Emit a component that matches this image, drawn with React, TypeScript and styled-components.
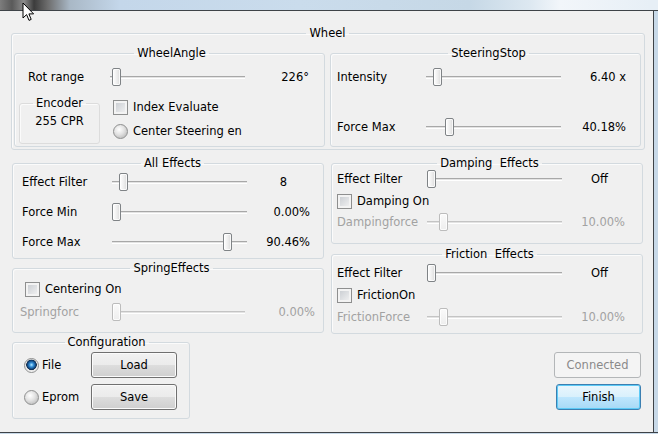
import styled, { createGlobalStyle } from "styled-components";

const GlobalStyle = createGlobalStyle`
  html, body {
    margin: 0;
    padding: 0;
    background: #f0f0f0;
  }
  body {
    font-family: "DejaVu Sans", "Liberation Sans", sans-serif;
    font-size: 11.5px;
    color: #000;
  }
  * {
    box-sizing: border-box;
  }
`;

const Window = styled.div`
  position: relative;
  width: 658px;
  height: 434px;
  overflow: hidden;
  display: flex;
  flex-direction: column;
  background: #c8d9e8;
`;

const TitleStrip = styled.div`
  flex: none;
  height: 11px;
  border-bottom: 1px solid #3e4348;
  background: linear-gradient(
    to right,
    #7d7d7d 0px,
    #5a5a5a 12px,
    #8c8c8c 24px,
    #3c3c3c 34px,
    #6e6e6e 48px,
    #a9b8c6 70px,
    #c4d7ea 120px,
    #cadcec 300px,
    #c6d8e6 470px,
    #dde8f1 530px,
    #f2f6fa 560px,
    #e7eff6 650px
  );
`;

const Frame = styled.div`
  flex: none;
  display: flex;
  height: 422px;
  border-bottom: 1px solid #3e4348;
`;

const Client = styled.div`
  width: 654px;
  height: 100%;
  background: #f0f0f0;
  border-right: 1px solid #3e4348;
  padding: 16px 0 0 11px;
`;

const Group = styled.fieldset<{ $w: number; $h: number; $pad?: string }>`
  margin: 0;
  min-width: 0;
  flex: none;
  width: ${(p) => p.$w}px;
  height: ${(p) => p.$h}px;
  padding: ${(p) => p.$pad ?? "0"};
  border: 1px solid #d3dadf;
  border-radius: 3px;
  box-shadow: inset 1px 1px 0 #fbfbfb;
`;

const Legend = styled.legend`
  margin: 0 auto;
  padding: 0 3px;
  line-height: 13px;
  white-space: pre;
`;

const Row = styled.div`
  display: flex;
  gap: 5px;
`;

const Lower = styled.div`
  display: flex;
  gap: 7px;
  margin: 7px 0 0 1px;
`;

const Column = styled.div`
  display: flex;
  flex-direction: column;
`;

const SliderRow = styled.div<{ $cols: string; $h?: number; $mt?: number; $ml?: number }>`
  display: grid;
  grid-template-columns: ${(p) => p.$cols};
  align-items: center;
  height: ${(p) => p.$h ?? 20}px;
  margin-top: ${(p) => p.$mt ?? 0}px;
  margin-left: ${(p) => p.$ml ?? 0}px;
`;

const Label = styled.span<{ $off?: boolean }>`
  line-height: 13px;
  white-space: nowrap;
  color: ${(p) => (p.$off ? "#a2a2a2" : "#000")};
`;

const Value = styled.span<{ $off?: boolean; $pr?: number }>`
  text-align: right;
  line-height: 13px;
  white-space: nowrap;
  padding-right: ${(p) => p.$pr ?? 0}px;
  color: ${(p) => (p.$off ? "#a2a2a2" : "#000")};
`;

const SliderBox = styled.div`
  position: relative;
  height: 100%;
  display: flex;
  align-items: center;
`;

const Track = styled.div<{ $off?: boolean }>`
  width: 100%;
  height: 3px;
  border-top: 1px solid ${(p) => (p.$off ? "#c4c4c4" : "#a8a8a8")};
  border-bottom: 1px solid #ffffff;
  background: #e3e3e3;
`;

const Thumb = styled.div<{ $off?: boolean }>`
  position: absolute;
  top: 50%;
  width: 9px;
  height: 18px;
  margin-top: -9px;
  border: 1px solid ${(p) => (p.$off ? "#bcbcbc" : "#7f8386")};
  border-radius: 2px;
  background: ${(p) =>
    p.$off
      ? "linear-gradient(#fafafa, #eeeeee)"
      : "linear-gradient(to right, #ffffff, #ececec 60%, #dadada)"};
  box-shadow: inset 0 0 0 1px rgba(255, 255, 255, 0.8);
`;

const CheckItem = styled.label<{ $mt?: number; $ml?: number }>`
  display: flex;
  align-items: center;
  gap: 5px;
  height: 16px;
  margin-top: ${(p) => p.$mt ?? 0}px;
  margin-left: ${(p) => p.$ml ?? 0}px;
  line-height: 13px;
  white-space: nowrap;
`;

const CheckBox = styled.span`
  flex: none;
  width: 15px;
  height: 15px;
  border: 1px solid #8e8f8f;
  background: linear-gradient(135deg, #c5c9ce, #f5f5f5);
  box-shadow: inset 0 0 0 2px #f3f3f3;
`;

const Radio = styled.span<{ $on?: boolean }>`
  flex: none;
  width: 15px;
  height: 15px;
  border: 1px solid #8e8f8f;
  border-radius: 50%;
  background: ${(p) =>
    p.$on
      ? "radial-gradient(circle at 50% 45%, #b5eaff 0px, #3591da 2px, #0b3a6e 4.5px, #1a2f48 5px, #e4e4e4 5.5px, #f4f4f4 7px)"
      : "radial-gradient(circle at 40% 35%, #ffffff 0px, #e2e2e2 5px, #c9c9c9 8px)"};
`;

const Encoder = styled(Group)`
  text-align: center;
  padding-top: 4px;
  border-color: #dcdcdc;
`;

const Checks = styled.div`
  display: flex;
  flex-direction: column;
  gap: 8px;
  padding-top: 2px;
  margin-left: 8px;
`;

const ConfigRow = styled.div<{ $mt?: number }>`
  display: flex;
  align-items: center;
  height: 26px;
  margin-top: ${(p) => p.$mt ?? 0}px;
`;

const Option = styled.label`
  display: flex;
  align-items: center;
  gap: 3px;
  width: 67px;
  line-height: 13px;
`;

const Button = styled.button<{ $w: number; $kind?: "default" | "off" | "focus" }>`
  width: ${(p) => p.$w}px;
  height: 26px;
  padding: 0;
  font-family: inherit;
  font-size: 11.5px;
  border-radius: 3px;
  color: ${(p) => (p.$kind === "off" ? "#8a8a8a" : "#000")};
  border: 1px solid
    ${(p) => (p.$kind === "off" ? "#b3b6b8" : p.$kind === "focus" ? "#3c7fb1" : "#707070")};
  background: ${(p) =>
    p.$kind === "off"
      ? "#f4f4f4"
      : p.$kind === "focus"
      ? "linear-gradient(#eaf6fd 0%, #d9f0fc 50%, #bee6fd 51%, #a7d9f5 100%)"
      : "linear-gradient(#f2f2f2 0%, #ebebeb 50%, #dddddd 51%, #cfcfcf 100%)"};
  box-shadow: inset 0 0 0 1px
    ${(p) => (p.$kind === "focus" ? "#5ccaf6" : p.$kind === "off" ? "#f4f4f4" : "#fbfbfb")};
`;

const ButtonStack = styled.div`
  display: flex;
  flex-direction: column;
  align-items: flex-end;
  gap: 6px;
  margin-top: 18px;
  padding-right: 2px;
`;

const Cursor = styled.svg`
  position: absolute;
  left: 22px;
  top: 2px;
  width: 13px;
  height: 20px;
`;

function Slider({ pos, off }: { pos: number; off?: boolean }) {
  return (
    <SliderBox>
      <Track $off={off} />
      <Thumb $off={off} style={{ left: pos }} />
    </SliderBox>
  );
}

export default function App() {
  return (
    <>
      <GlobalStyle />
      <Window>
        <TitleStrip />
        <Frame>
          <Client>
            <Group $w={634} $h={123} $pad="7px 3px 2px 2px">
              <Legend>Wheel</Legend>
              <Row>
                <Group $w={311} $h={100} $pad="7px 0 0 4px">
                  <Legend>WheelAngle</Legend>
                  <SliderRow $cols="82px 135px 64px" $ml={9}>
                    <Label>Rot range</Label>
                    <Slider pos={2} />
                    <Value>226°</Value>
                  </SliderRow>
                  <Row style={{ marginTop: 10 }}>
                    <Encoder $w={81} $h={47}>
                      <Legend>Encoder</Legend>
                      255 CPR
                    </Encoder>
                    <Checks>
                      <CheckItem>
                        <CheckBox />
                        Index Evaluate
                      </CheckItem>
                      <CheckItem>
                        <Radio />
                        Center Steering en
                      </CheckItem>
                    </Checks>
                  </Row>
                </Group>
                <Group $w={311} $h={100} $pad="7px 0 0 6px">
                  <Legend>SteeringStop</Legend>
                  <SliderRow $cols="89px 135px 65px">
                    <Label>Intensity</Label>
                    <Slider pos={7} />
                    <Value>6.40 x</Value>
                  </SliderRow>
                  <SliderRow $cols="89px 135px 65px" $mt={30}>
                    <Label>Force Max</Label>
                    <Slider pos={19} />
                    <Value>40.18%</Value>
                  </SliderRow>
                </Group>
              </Row>
            </Group>

            <Lower>
              <Column>
                <Group $w={312} $h={102} $pad="2px 0 0 9px">
                  <Legend>All Effects</Legend>
                  <SliderRow $cols="90px 135px 63px">
                    <Label>Effect Filter</Label>
                    <Slider pos={7} />
                    <Value $pr={23}>8</Value>
                  </SliderRow>
                  <SliderRow $cols="90px 135px 63px" $mt={10}>
                    <Label>Force Min</Label>
                    <Slider pos={0} />
                    <Value>0.00%</Value>
                  </SliderRow>
                  <SliderRow $cols="90px 135px 63px" $mt={10}>
                    <Label>Force Max</Label>
                    <Slider pos={111} />
                    <Value>90.46%</Value>
                  </SliderRow>
                </Group>
                <Group $w={312} $h={71} $pad="6px 0 0 7px" style={{ marginTop: 3 }}>
                  <Legend>SpringEffects</Legend>
                  <CheckItem $ml={5}>
                    <CheckBox />
                    Centering On
                  </CheckItem>
                  <SliderRow $cols="92px 133px 70px" $h={18} $mt={6}>
                    <Label $off>Springforc</Label>
                    <Slider pos={0} off />
                    <Value $off>0.00%</Value>
                  </SliderRow>
                </Group>
                <Group $w={178} $h={83} $pad="3px 0 0 11px" style={{ marginTop: 3 }}>
                  <Legend>Configuration</Legend>
                  <ConfigRow>
                    <Option>
                      <Radio $on />
                      File
                    </Option>
                    <Button $w={86}>Load</Button>
                  </ConfigRow>
                  <ConfigRow $mt={6}>
                    <Option>
                      <Radio />
                      Eprom
                    </Option>
                    <Button $w={86}>Save</Button>
                  </ConfigRow>
                </Group>
              </Column>

              <Column>
                <Group $w={312} $h={87} $pad="0 0 0 5px">
                  <Legend>{"Damping  Effects"}</Legend>
                  <SliderRow $cols="90px 135px 64px" $h={18}>
                    <Label>Effect Filter</Label>
                    <Slider pos={0} />
                    <Value $pr={18}>Off</Value>
                  </SliderRow>
                  <CheckItem $mt={5}>
                    <CheckBox />
                    Damping On
                  </CheckItem>
                  <SliderRow $cols="90px 135px 64px" $h={18} $mt={4}>
                    <Label $off>Dampingforce</Label>
                    <Slider pos={12} off />
                    <Value $off $pr={1}>10.00%</Value>
                  </SliderRow>
                </Group>
                <Group $w={312} $h={86} $pad="3px 0 0 5px" style={{ marginTop: 4 }}>
                  <Legend>{"Friction  Effects"}</Legend>
                  <SliderRow $cols="90px 135px 64px" $h={18}>
                    <Label>Effect Filter</Label>
                    <Slider pos={0} />
                    <Value $pr={18}>Off</Value>
                  </SliderRow>
                  <CheckItem $mt={5}>
                    <CheckBox />
                    FrictionOn
                  </CheckItem>
                  <SliderRow $cols="90px 135px 64px" $h={18} $mt={5}>
                    <Label $off>FrictionForce</Label>
                    <Slider pos={12} off />
                    <Value $off $pr={1}>10.00%</Value>
                  </SliderRow>
                </Group>
                <ButtonStack>
                  <Button $w={87} $kind="off">
                    Connected
                  </Button>
                  <Button $w={85} $kind="focus">
                    Finish
                  </Button>
                </ButtonStack>
              </Column>
            </Lower>
          </Client>
        </Frame>
        <Cursor viewBox="0 0 13 20">
          <path
            d="M1 1 L1 16 L4.6 12.6 L7 18.4 L9.2 17.4 L6.9 11.9 L11.6 11.9 Z"
            fill="#fff"
            stroke="#000"
            strokeWidth="1"
            strokeLinejoin="miter"
          />
        </Cursor>
      </Window>
    </>
  );
}
